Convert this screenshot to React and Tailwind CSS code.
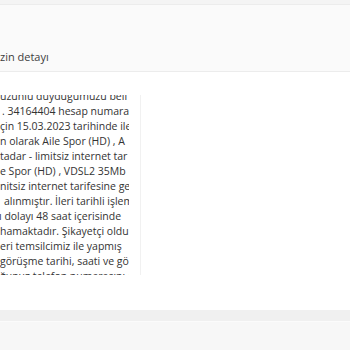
import React from "react";

const lines = [
  { t: "uzunlu duyduğumuzu beli", x: 0 },
  { t: ". 34164404 hesap numara", x: 2 },
  { t: "çin 15.03.2023 tarihinde ile", x: 0 },
  { t: "n olarak Aile Spor (HD) , A", x: 0 },
  { t: "tadar - limitsiz internet tar", x: 0 },
  { t: "e Spor (HD) , VDSL2 35Mb", x: 0 },
  { t: "nitsiz internet tarifesine ge", x: 0 },
  { t: "alınmıştır. İleri tarihli işlem", x: 4 },
  { t: "ı dolayı 48 saat içerisinde", x: -1 },
  { t: "hamaktadır. Şikayetçi oldu", x: 0 },
  { t: "eri temsilcimiz ile yapmış", x: 0 },
  { t: "görüşme tarihi, saati ve gö", x: 0 },
  { t: "ğunuz telefon numarasını d", x: 0 },
];

export default function App() {
  return (
    <div
      className="w-[350px] h-[350px] overflow-hidden flex flex-col bg-[#f4f4f4] pt-[4px]"
      style={{ fontFamily: '"Open Sans", "Liberation Sans", sans-serif' }}
    >
      <div className="h-[68px] shrink-0 bg-[#fafafa] border-t border-b border-[#ececec] flex items-end pb-[7px]">
        <span className="text-[11px] leading-[14px] text-[#3d3d3d]">zin detayı</span>
      </div>
      <div className="h-[238px] shrink-0 bg-white pt-[23px]">
        <div className="w-[141px] h-[180px] border-r border-[#f1f1f1] overflow-hidden">
          <div className="w-[129px] overflow-hidden -mt-[6px]">
            {lines.map((l, i) => (
              <div
                key={i}
                className="whitespace-nowrap text-[10.5px] leading-[15px] text-[#333333]"
                style={{ marginLeft: l.x }}
              >
                {l.t}
              </div>
            ))}
          </div>
        </div>
      </div>
      <div className="h-[12px] shrink-0 bg-[#f0f0f0] border-b border-[#fbfbfb]"></div>
      <div className="flex-1 bg-[#f7f7f7]"></div>
    </div>
  );
}
